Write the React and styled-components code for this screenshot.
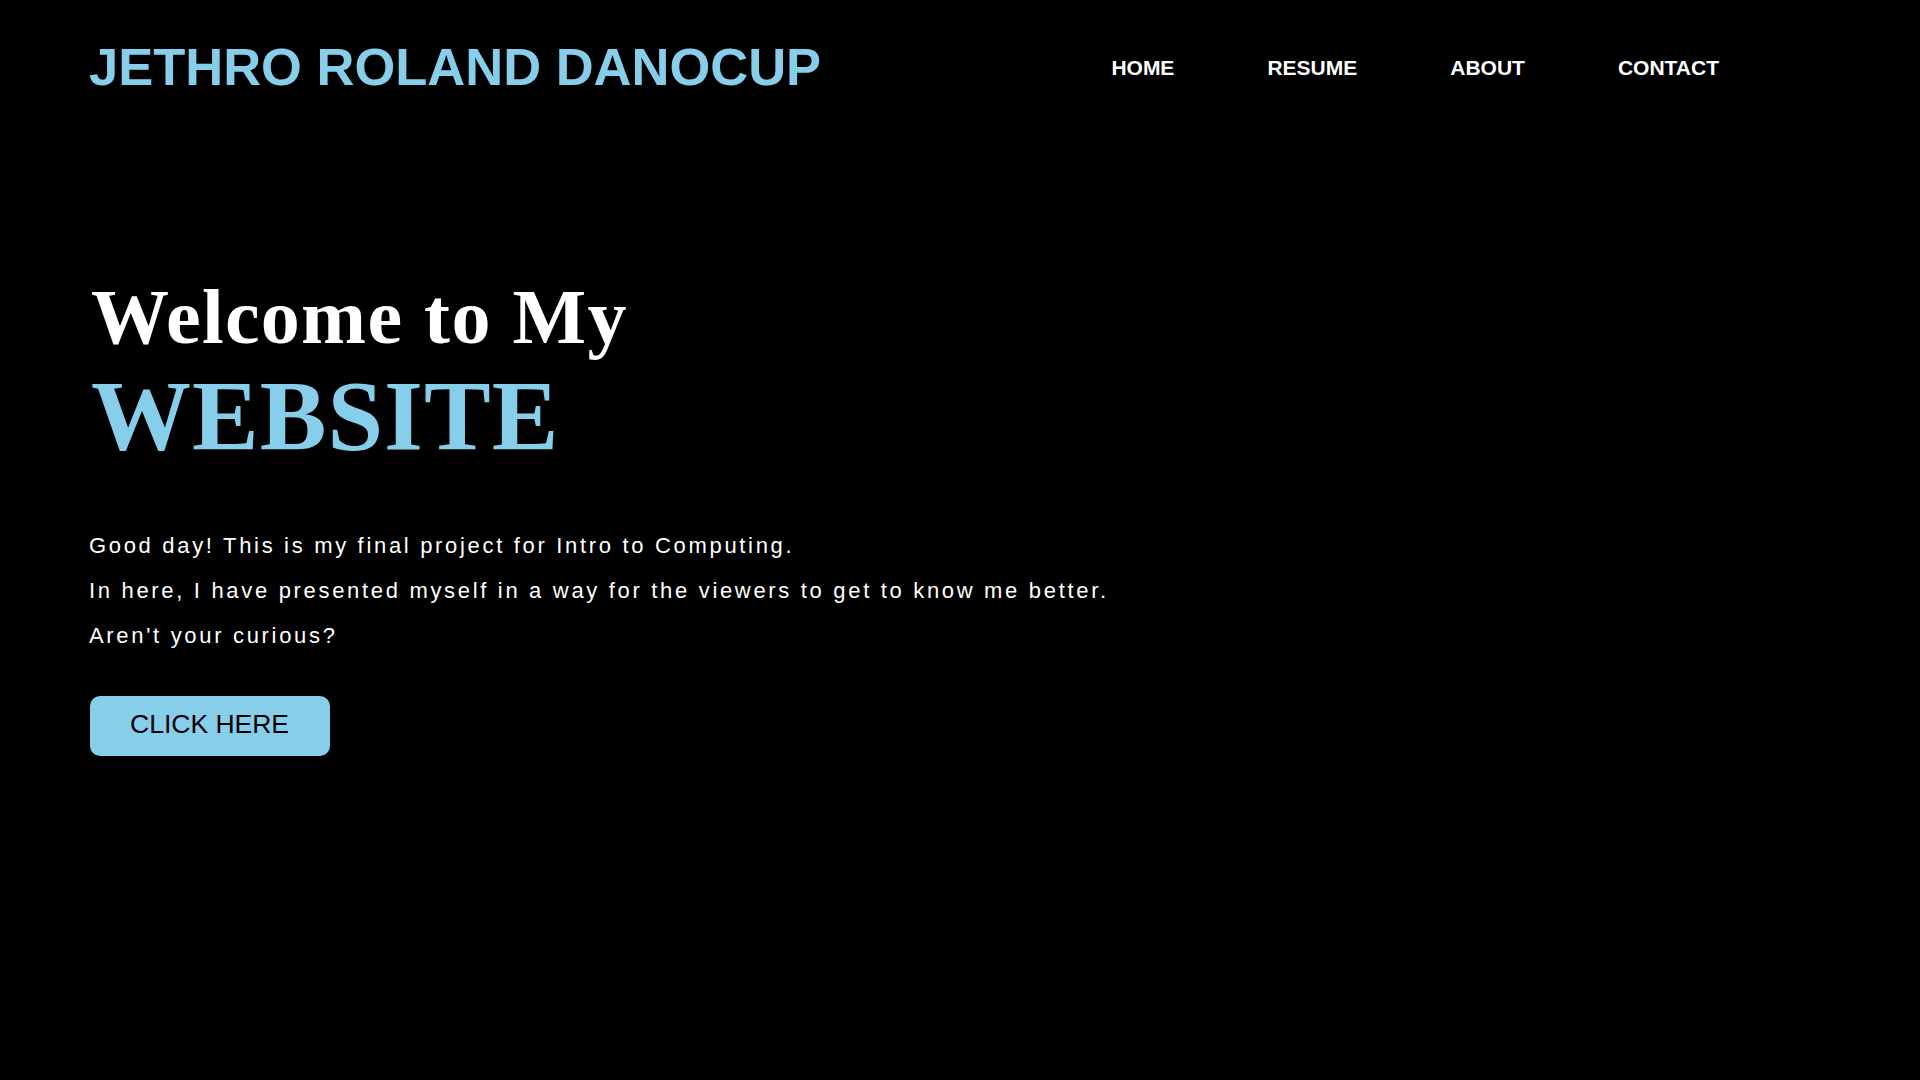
import React from 'react';
import styled, { createGlobalStyle } from 'styled-components';

const GlobalStyle = createGlobalStyle`
  html, body {
    margin: 0;
    padding: 0;
    background: #000;
  }
  body {
    font-family: "Liberation Sans", Arial, sans-serif;
    color: #fff;
  }
`;

const Page = styled.div`
  min-height: 100vh;
  background: #000;
`;

const Header = styled.header`
  display: flex;
  align-items: center;
  justify-content: space-between;
  padding: 37px 201px 0 89px;
  height: 60px;
`;

const Logo = styled.h1`
  margin: 0;
  font-family: "Liberation Sans", Arial, sans-serif;
  font-size: 52.5px;
  font-weight: 700;
  color: #87ceeb;
  line-height: 60px;
`;

const Nav = styled.nav`
  display: flex;
  gap: 93px;
  padding-top: 2px;
`;

const NavLink = styled.a`
  font-family: "Liberation Sans", Arial, sans-serif;
  font-size: 21px;
  font-weight: 700;
  color: #fff;
  text-decoration: none;
  cursor: pointer;
`;

const Hero = styled.section`
  padding: 181px 0 0 91px;
`;

const Greeting = styled.h2`
  margin: 0;
  font-family: "Liberation Serif", "Times New Roman", serif;
  font-size: 78px;
  font-weight: 700;
  line-height: 1;
  letter-spacing: 1.3px;
  color: #fff;
`;

const Highlight = styled.h2`
  margin: 10px 0 0;
  font-family: "Liberation Serif", "Times New Roman", serif;
  font-size: 100px;
  font-weight: 700;
  line-height: 1;
  letter-spacing: 1px;
  color: #87ceeb;
`;

const Intro = styled.div`
  margin-top: 57px;
  margin-left: -2px;
`;

const Line = styled.p`
  margin: 0;
  font-size: 22px;
  line-height: 45px;
  letter-spacing: 2.68px;
  color: #fff;
`;

const Button = styled.button`
  margin-top: 38px;
  margin-left: -1px;
  height: 60px;
  padding: 0 41px 3px 40px;
  border: none;
  border-radius: 10px;
  background: #87ceeb;
  color: #000;
  font-family: "Liberation Sans", Arial, sans-serif;
  font-size: 26.5px;
  cursor: pointer;
`;

export default function App() {
  return (
    <Page>
      <GlobalStyle />
      <Header>
        <Logo>JETHRO ROLAND DANOCUP</Logo>
        <Nav>
          <NavLink>HOME</NavLink>
          <NavLink>RESUME</NavLink>
          <NavLink>ABOUT</NavLink>
          <NavLink>CONTACT</NavLink>
        </Nav>
      </Header>
      <Hero>
        <Greeting>Welcome to My</Greeting>
        <Highlight>WEBSITE</Highlight>
        <Intro>
          <Line>Good day! This is my final project for Intro to Computing.</Line>
          <Line>In here, I have presented myself in a way for the viewers to get to know me better.</Line>
          <Line>Aren't your curious?</Line>
        </Intro>
        <Button>CLICK HERE</Button>
      </Hero>
    </Page>
  );
}
